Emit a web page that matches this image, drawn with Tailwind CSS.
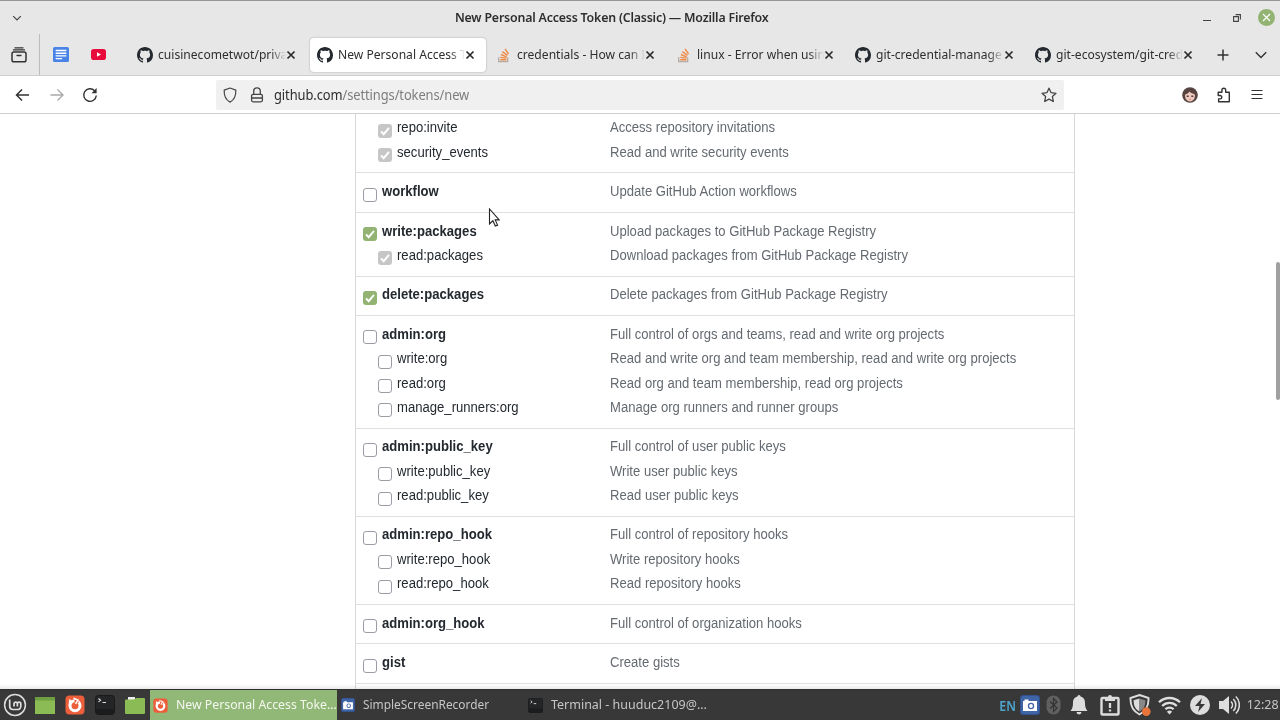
<!DOCTYPE html>
<html lang="en">
<head>
<meta charset="utf-8">
<title>New Personal Access Token (Classic)</title>
<script src="https://cdn.jsdelivr.net/npm/@tailwindcss/browser@4"></script>
</head>
<body class="w-[1280px] h-[720px] overflow-hidden bg-white font-['Noto_Sans',sans-serif] text-[#2e2e2e]">
<svg class="hidden">
  <symbol id="github" viewBox="0 0 16 16"><path fill="#24292f" d="M8 0C3.58 0 0 3.58 0 8c0 3.54 2.29 6.53 5.47 7.59.4.07.55-.17.55-.38 0-.19-.01-.82-.01-1.49-2.01.37-2.53-.49-2.69-.94-.09-.23-.48-.94-.82-1.13-.28-.15-.68-.52-.01-.53.63-.01 1.08.58 1.23.82.72 1.21 1.87.87 2.33.66.07-.52.28-.87.51-1.07-1.78-.2-3.64-.89-3.64-3.95 0-.87.31-1.59.82-2.15-.08-.2-.36-1.02.08-2.12 0 0 .67-.21 2.2.82.64-.18 1.32-.27 2-.27s1.36.09 2 .27c1.53-1.04 2.2-.82 2.2-.82.44 1.1.16 1.92.08 2.12.51.56.82 1.27.82 2.15 0 3.07-1.87 3.75-3.65 3.95.29.25.54.73.54 1.48 0 1.07-.01 1.93-.01 2.2 0 .21.15.46.55.38A8.01 8.01 0 0 0 16 8c0-4.42-3.58-8-8-8z"/></symbol>
  <symbol id="stack" viewBox="0 0 16 16"><path d="M2.700 10.200v4.500h9v-4.500" fill="none" stroke="#b5aba3" stroke-width="1.300"/><g stroke="#ee8a45" stroke-width="1.350"><path d="M4.200 12.700h6.200M4.300 10.300l6.200.9M4.900 7.500l5.800 2.300M6.400 4.600l5.100 3.800M9 1.900l3.600 5.100"/></g></symbol>
  <symbol id="close" viewBox="0 0 10 10"><path d="M1.500 1.500l7 7M8.500 1.500l-7 7" stroke="#2a2a2a" stroke-width="1.700" fill="none"/></symbol>
  <symbol id="firefox" viewBox="0 0 20 20"><rect x=".5" y=".5" width="19" height="19" rx="4" fill="#ed5f3b"/><circle cx="10" cy="10.700" r="5" fill="none" stroke="#fff" stroke-width="3"/><path d="M9.500 3h4v5h-4z" fill="#ed5f3b"/><path d="M3.600 10.500L4.200 4l4 2.600z" fill="#fff"/><path d="M8.500 3.300l4.500 1.800-2.500 3.700" stroke="#fff" stroke-width="1.500" fill="none"/></symbol>
  <symbol id="terminal" viewBox="0 0 20 20"><rect x=".5" y=".5" width="19" height="19" rx="3" fill="#232527" stroke="#17191a"/><path d="M1 14h18v3a2 2 0 0 1-2 2H3a2 2 0 0 1-2-2z" fill="#1a1c1d"/><path d="M3.500 3.500l2 1.700-2 1.700M7.500 7.500h3.500" stroke="#ddd" stroke-width="1.200" fill="none"/></symbol>
  <symbol id="camera" viewBox="0 0 20 20"><rect x=".5" y=".5" width="19" height="19" rx="2.500" fill="#3f65a6" stroke="#315190"/><path d="M3 6h14v10H3zM4.500 4.500h4V6h-4z" fill="#fff"/><circle cx="11" cy="11" r="3.200" fill="#3f65a6"/><circle cx="11" cy="11" r="1.900" fill="#fff"/></symbol>
</svg>
<div class="flex flex-col h-full">
  <header class="bg-[#e7e7e7] border-t border-[#98959a] h-[75px] shrink-0 flex flex-col">
    <div class="h-[33px] flex items-center">
      <div class="w-[345px] pl-3 shrink-0"><svg class="w-2.5 h-2.5" viewBox="0 0 10 10"><path d="M1.200 3.200L5 7l3.800-3.800" fill="none" stroke="#444" stroke-width="1.200"/></svg></div>
      <div class="flex-1 flex justify-center pr-[56px]"><span class="text-[13px] font-semibold whitespace-nowrap tracking-[-0.2px] scale-x-[.952]">New Personal Access Token (Classic) — Mozilla Firefox</span></div>
      <div class="w-[345px] flex justify-end items-center pr-[5px] shrink-0">
        <svg class="w-2 h-4 mr-[22px]" viewBox="0 0 8 16"><path d="M0 10.500h8" stroke="#444"/></svg>
        <svg class="w-2 h-2 mr-[17px]" viewBox="0 0 8 8"><path d="M.6 2.600h4.800v4.800H.6zM2.600.6h4.800v4.800" fill="none" stroke="#444" stroke-width="1.100"/></svg>
        <svg class="w-[17px] h-[17px]" viewBox="0 0 17 17"><circle cx="8.500" cy="8.500" r="8.500" fill="#92b372"/><path d="M5 5l7 7M12 5l-7 7" stroke="#fff" stroke-width="1.200"/></svg>
      </div>
    </div>
    <div class="flex h-[41px] items-center">
      <div class="w-10 h-full border-r border-[#bdbdbd] flex items-center pl-[10.500px] shrink-0"><svg class="w-4 h-4" viewBox="0 0 16 16"><rect x="1" y="5" width="14" height="9.800" rx="1.800" fill="none" stroke="#333" stroke-width="1.500"/><path d="M2.500 2.900h11M4 .8h8M6 8.500h4" stroke="#333" stroke-width="1.300" stroke-linecap="round"/></svg></div>
      <div class="w-[90px] flex items-center pl-[13px] gap-[22px] shrink-0">
        <svg class="w-[16px] h-[15px]" viewBox="0 0 15 15" preserveAspectRatio="none"><rect width="15" height="15" rx="1.500" fill="#4a83e8"/><path d="M2.500 3.500h10M2.500 6.200h10M2.500 8.900h10M2.500 11.600h6" stroke="#fff" stroke-width="1.400"/></svg>
        <svg class="w-[15px] h-[11px]" viewBox="0 0 15 11"><rect width="15" height="11" rx="2.800" fill="#e80c3c"/><path d="M6 3.200v4.600l4-2.300z" fill="#fff"/></svg>
      </div>
      <div id="tabs" class="flex gap-[3.500px] shrink-0"></div>
      <svg class="w-3 h-3 ml-[13px] shrink-0" viewBox="0 0 12 12"><path d="M6 .5v11M.5 6h11" stroke="#333" stroke-width="1.500"/></svg>
      <svg class="w-3 h-3 ml-[26px] shrink-0" viewBox="0 0 12 12"><path d="M.8 3.200L6 8.400l5.200-5.200" fill="none" stroke="#333" stroke-width="1.400"/></svg>
    </div>
  </header>
  <nav class="h-[39px] shrink-0 border-y border-[#cfcfcf] bg-white flex items-center">
    <div class="w-[216px] flex items-center pl-[15px] gap-[17.500px] shrink-0">
      <svg class="w-4 h-4" viewBox="0 0 16 16"><path d="M14 8H1.800M7 2.500L1.500 8 7 13.500" fill="none" stroke="#333" stroke-width="1.500"/></svg>
      <svg class="w-4 h-4" viewBox="0 0 16 16"><path d="M1.500 8h12.200M8.500 2.500L14 8l-5.500 5.500" fill="none" stroke="#aaa" stroke-width="1.400"/></svg>
      <svg class="w-4 h-4" viewBox="0 0 16 16"><path d="M14.300 8.500A6.300 6.300 0 1 1 12.600 3.700" fill="none" stroke="#333" stroke-width="1.400"/><path d="M14.600 1v5.200H9.500z" fill="#333"/></svg>
    </div>
    <div class="w-[848px] h-[30px] rounded-xs bg-[#f0f0f0] flex items-center pl-[6px] pr-[7px] shrink-0">
      <svg class="w-4 h-4" viewBox="0 0 16 16"><path d="M8 1l5.800 2.100c.3 5.500-1 9.400-5.800 12C3.200 12.500 1.900 8.600 2.200 3.100z" fill="none" stroke="#444" stroke-width="1.200" stroke-linejoin="round"/></svg>
      <svg class="w-4 h-4 ml-[11px]" viewBox="0 0 16 16"><rect x="2.600" y="7.300" width="10.800" height="7.500" rx="1.500" fill="none" stroke="#444" stroke-width="1.300"/><path d="M4.700 7.300V4.200a3.300 3.300 0 0 1 6.600 0v3.100M3 11h10" fill="none" stroke="#444" stroke-width="1.300"/></svg>
      <span class="ml-[8.500px] text-[14px] whitespace-nowrap tracking-[-0.1px] text-[#7d7d7d] origin-left scale-x-[.922]"><span class="text-[#2e2e2e]">github.com</span>/settings/tokens/new</span>
      <svg class="w-4 h-4 ml-auto" viewBox="0 0 16 16"><path d="M8 1.200l2.100 4.500 4.900.6-3.600 3.300.9 4.900L8 12.100l-4.300 2.400.9-4.900L1 6.300l4.900-.6z" fill="none" stroke="#444" stroke-width="1.300" stroke-linejoin="round"/></svg>
    </div>
    <div class="flex-1 flex justify-end items-center pr-[16px] gap-[18px]">
      <svg class="w-4 h-4" viewBox="0 0 16 16"><circle cx="8" cy="8" r="7.800" fill="#57433f"/><path d="M3.200 7.500C5 7 6.500 6 7.500 4.500 8.500 6 11 6.500 12.800 7.500c.6 3.500-1.300 6.800-4.800 7-3.500-.2-5.400-3.500-4.800-7z" fill="#efcbbf"/><path d="M4.700 9.300h2M9.300 9.300h2" stroke="#5a3440" stroke-width="1.500"/><path d="M7.200 12.300h1.600" stroke="#d27373"/></svg>
      <svg class="w-4 h-4" viewBox="0 0 16 16"><path d="M2.200 5.300h3.700V3.200a1.900 1.900 0 0 1 3.800 0v2.100h3.600v9.400H2.600v-2.800h1.500a1.700 1.700 0 0 0 0-3.400H2.200z" fill="none" stroke="#333" stroke-width="1.400" stroke-linejoin="round"/></svg>
      <svg class="w-3.5 h-3.5" viewBox="0 0 14 14"><path d="M1.500 2.500h11M1.500 6.500h11M1.500 10.500h11" stroke="#333" stroke-width="1.200"/></svg>
    </div>
  </nav>
  <main class="relative h-[575px] shrink-0 overflow-hidden flex justify-center pl-[150px] font-['Liberation_Sans',Arial,sans-serif] text-[14px]">
    <div id="scopes" class="w-[720px] border-x border-[#d8d8d8] text-[#24292f] shrink-0"></div>
    <div class="absolute right-0 top-[148px] w-1 h-[138px] rounded-sm bg-[#a0a0a0]"></div>
    <svg class="absolute left-[488px] top-[94px] w-3 h-5" viewBox="0 0 12 20"><path d="M1.500 1v15l3.400-3.200 2.400 5.300 2.300-1-2.400-5.200h4z" fill="#fff" stroke="#222" stroke-width="1.100"/></svg>
    <div class="absolute inset-x-0 bottom-0 h-[5px] bg-linear-to-b from-transparent to-black/8"></div>
  </main>
  <footer class="h-[31px] shrink-0 bg-[#383838] border-t border-[#303030] flex items-center text-[#c6c6c6] text-[13px]">
    <div class="w-[150px] flex items-center pl-[3px] gap-[8px] shrink-0">
      <svg class="w-6 h-6 -mr-px shrink-0" viewBox="0 0 24 24"><circle cx="12" cy="12" r="10.400" fill="none" stroke="#ddd" stroke-width="1.500"/><path d="M6.700 6.500v6.800a3.200 3.200 0 0 0 3.200 3.200h4.700a3.200 3.200 0 0 0 3.200-3.200v-2.500a1.700 1.700 0 0 0-3.400 0V13.500v-2.700a1.700 1.700 0 0 0-3.400 0v2.700" fill="none" stroke="#ddd" stroke-width="1.700"/></svg>
      <svg class="w-[22px] h-[19px] shrink-0" viewBox="0 0 22 19"><path d="M1 1h20v17H1z" fill="#8bbb55"/><path d="M1 1h20v3.500H1z" fill="#6f9d42"/></svg>
      <svg class="w-[22px] h-5 shrink-0"><use href="#firefox"/></svg>
      <svg class="w-[22px] h-5 shrink-0"><use href="#terminal"/></svg>
      <svg class="w-[22px] h-[19px] shrink-0" viewBox="0 0 22 19"><path d="M4 4V1h7v3z" fill="#eee"/><path d="M1 4.500a1 1 0 0 1 1-1h8L12 2h8a1 1 0 0 1 1 1v14a1 1 0 0 1-1 1H2a1 1 0 0 1-1-1z" fill="#8bbb55"/></svg>
    </div>
    <div class="w-[187px] h-full bg-[#92b877] text-[#f4f7f1] flex items-center pl-[3px] shrink-0"><svg class="w-[15px] h-[15px] mr-2 shrink-0"><use href="#firefox"/></svg><span class="w-[160px] shrink-0"><span class="inline-block whitespace-nowrap origin-left scale-x-[.945]">New Personal Access Toke…</span></span></div>
    <div class="w-[188px] h-full flex items-center pl-1 shrink-0"><svg class="w-[14px] h-[14px] mr-2 shrink-0"><use href="#camera"/></svg><span class="whitespace-nowrap origin-left scale-x-[.915]">SimpleScreenRecorder</span></div>
    <div class="w-[220px] h-full flex items-center pl-[3px] shrink-0"><svg class="w-[15px] h-[15px] mr-2 shrink-0"><use href="#terminal"/></svg><span class="whitespace-nowrap origin-left scale-x-[.96]">Terminal - huuduc2109@…</span></div>
    <div class="flex-1 flex items-center justify-end pr-[1px] shrink-0">
      <span class="text-[#4da4ce] mr-[4px] text-[14px] font-semibold whitespace-nowrap origin-right scale-x-[.88]">EN</span>
      <svg class="w-5 h-5 mr-[6px]"><use href="#camera"/></svg>
      <svg class="w-[15px] h-5 mr-[9px]" viewBox="0 0 15 20"><rect x=".5" y=".5" width="14" height="19" rx="7" fill="#606060"/><path d="M4 6.500l7 6.500-3.500 3.500v-13L11 7l-7 6.500" fill="none" stroke="#333" stroke-width="1.200"/></svg>
      <svg class="w-[18px] h-5 mr-[12px]" viewBox="0 0 18 20"><path d="M9 0a1.600 1.600 0 0 1 1.600 1.600C14 2.500 15 5 15 8c0 4 .9 6 2.500 8H.5C2.100 14 3 12 3 8c0-3 1-5.500 4.400-6.400A1.600 1.600 0 0 1 9 0zM6.500 17h5a2.500 2.500 0 0 1-5 0z" fill="#ddd"/></svg>
      <svg class="w-5 h-[22px] mr-[9px]" viewBox="0 0 20 22"><rect x="1.500" y="4" width="17" height="16.500" rx="1" fill="none" stroke="#ddd" stroke-width="2.400"/><path d="M5 3h3a2 2 0 0 1 4 0h3v4H5z" fill="#ddd"/><path d="M10 9v5M10 15.500v2" stroke="#ddd" stroke-width="2.300"/></svg>
      <svg class="w-[22px] h-[22px] mr-[7px]" viewBox="0 0 22 22"><path d="M10.500 1l9 3c.4 8-1.800 13-9 16.500C3.300 17 1.100 12 1.500 4z" fill="none" stroke="#ddd" stroke-width="1.900"/><path d="M10.500 4.500v13C6 15 4.600 11.500 4.600 6.300z" fill="#ddd"/><path d="M10.500 4.500v13c4.500-2.500 5.900-6 5.900-11.200z" fill="#888"/><circle cx="17.300" cy="17.600" r="4.300" fill="#e8743a"/></svg>
      <svg class="w-[23px] h-[19px] mr-[9px]" viewBox="0 0 23 19"><g fill="none" stroke="#ddd" stroke-width="2.300"><path d="M1 6.300a15 15 0 0 1 21 0M4.200 10a10.300 10.300 0 0 1 14.600 0M7.400 13.300a5.800 5.800 0 0 1 8.200 0"/></g><path d="M11.500 18.500l-2.600-2.700a3.700 3.700 0 0 1 5.200 0z" fill="#ddd"/></svg>
      <svg class="w-5 h-5 mr-[9px]" viewBox="0 0 20 20"><circle cx="10" cy="10" r="10" fill="#ddd"/><path d="M12 3l-7 8h4.500L8 17l7-8h-4.500z" fill="#383838"/></svg>
      <svg class="w-[21px] h-5 mr-[6px]" viewBox="0 0 21 20"><path d="M0 6h4l6-5v18l-6-5H0z" fill="#ddd"/><path d="M12 6.500a5 5 0 0 1 0 7M14.300 4a8.500 8.500 0 0 1 0 12M16.800 1.500a12 12 0 0 1 0 17" fill="none" stroke="#ddd" stroke-width="1.600"/></svg>
      <span class="whitespace-nowrap scale-x-[.96]">12:28</span>
    </div>
  </footer>
</div>
<script>
const tabs = [["github","cuisinecometwot/priva",0],["github","New Personal Access T",1],["stack","credentials - How can I",0],["stack","linux - Error when usin",0],["github","git-credential-manage",0],["github","git-ecosystem/git-cred",0]];
document.getElementById("tabs").innerHTML = tabs.map(([icon,text,active]) => `
  <div class="w-[176px] h-[34px] rounded flex items-center pl-[7px] pr-[10.500px] ${active ? "bg-white shadow-[0_0_2px_rgba(0,0,0,.3)]" : ""}">
    <svg class="w-4 h-4 mr-[5px] shrink-0"><use href="#${icon}"/></svg>
    <span class="flex-1 overflow-hidden whitespace-nowrap text-[13px] text-[#2e2e2e] [mask-image:linear-gradient(to_right,#000_88%,transparent)]"><span class="inline-block align-top origin-left scale-x-[.93]">${text}</span></span>
    <svg class="w-2.5 h-2.5 shrink-0"><use href="#close"/></svg>
  </div>`).join("");

// state: 0 = unchecked, 1 = checked, 2 = implied by the parent scope
const groups = [
  [["repo:invite","Access repository invitations",2,1],["security_events","Read and write security events",2,1]],
  [["workflow","Update GitHub Action workflows",0]],
  [["write:packages","Upload packages to GitHub Package Registry",1],["read:packages","Download packages from GitHub Package Registry",2,1]],
  [["delete:packages","Delete packages from GitHub Package Registry",1]],
  [["admin:org","Full control of orgs and teams, read and write org projects",0],["write:org","Read and write org and team membership, read and write org projects",0,1],["read:org","Read org and team membership, read org projects",0,1],["manage_runners:org","Manage org runners and runner groups",0,1]],
  [["admin:public_key","Full control of user public keys",0],["write:public_key","Write user public keys",0,1],["read:public_key","Read user public keys",0,1]],
  [["admin:repo_hook","Full control of repository hooks",0],["write:repo_hook","Write repository hooks",0,1],["read:repo_hook","Read repository hooks",0,1]],
  [["admin:org_hook","Full control of organization hooks",0]],
  [["gist","Create gists",0]],
  []
];
const boxes = ["border border-[#9c9ca4] bg-white","bg-[#92b372]","bg-[#c6c6c6]"];
document.getElementById("scopes").innerHTML = groups.map((rows,g) => `
  <section class="${g ? "border-t border-[#e0e0e0] pt-[6px]" : "pt-[1.700px]"} pb-[8px]">${rows.map(([name,desc,state,child]) => `
    <div class="h-[24.400px] flex items-center">
      <div class="w-[254px] flex items-center ${child ? "pl-[22px]" : "pl-[7px]"}">
        <span class="w-[14px] h-[14px] mt-[6px] mr-[5px] rounded-[3px] shrink-0 ${boxes[state]}">${state ? '<svg viewBox="0 0 14 14" class="w-[14px] h-[14px]"><path d="M3 7.300l2.700 2.900 5.300-6.400" fill="none" stroke="#fff" stroke-width="1.900"/></svg>' : ""}</span>
        <span class="origin-left scale-x-[.936] ${child ? "" : "font-bold"}">${name}</span>
      </div>
      <span class="text-[#656a70] whitespace-nowrap origin-left scale-x-[.934]">${desc}</span>
    </div>`).join("")}
  </section>`).join("");
</script>
</body>
</html>
